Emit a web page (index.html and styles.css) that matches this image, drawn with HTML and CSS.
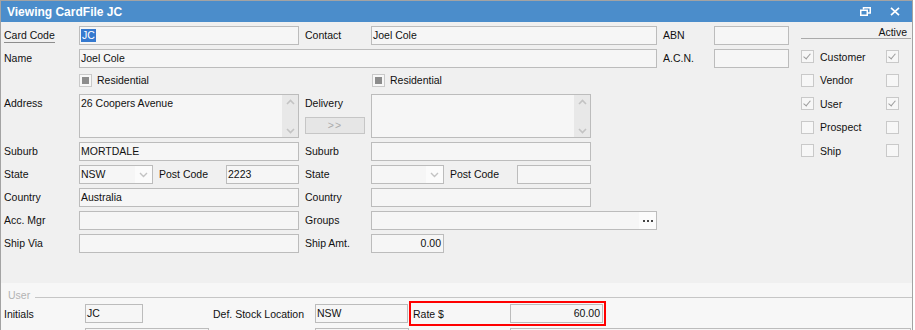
FILE: index.html
```html
<!DOCTYPE html>
<html lang="en">
<head>
    <meta charset="UTF-8">
    <title>Viewing CardFile JC</title>
    <link rel="stylesheet" href="styles.css">
</head>
<body>
<div class="window">
    <div class="titlebar">
        <span class="title">Viewing CardFile JC</span>
        <div class="win-btns">
            <svg class="win-icon" width="11" height="9" viewBox="0 0 11 9">
                <path d="M3.5 2.5V0.75H10.25V6H7.5" fill="none" stroke="#fff" stroke-width="1.5"/>
                <rect x="0.75" y="3.25" width="6.5" height="5" fill="none" stroke="#fff" stroke-width="1.5"/>
            </svg>
            <svg class="win-icon" width="10" height="9" viewBox="0 0 10 9">
                <path d="M1 0.8L9 8.2M9 0.8L1 8.2" stroke="#fff" stroke-width="1.7"/>
            </svg>
        </div>
    </div>

    <div class="main">
        <div class="form">
            <div class="row">
                <span class="lbl"><span class="link">Card Code</span></span>
                <div class="box w220"><span class="sel">JC</span></div>
                <span class="lbl2">Contact</span>
                <div class="box w286">Joel Cole</div>
                <span class="lbl3">ABN</span>
                <div class="box w75"></div>
            </div>
            <div class="row">
                <span class="lbl">Name</span>
                <div class="box w578">Joel Cole</div>
                <span class="lbl3">A.C.N.</span>
                <div class="box w75"></div>
            </div>
            <div class="row row-check">
                <span class="lbl"></span>
                <div class="chk-cell"><span class="chk ind"></span><span class="chk-text">Residential</span></div>
                <div class="chk-cell"><span class="chk ind"></span><span class="chk-text">Residential</span></div>
            </div>
            <div class="row row-area">
                <span class="lbl">Address</span>
                <div class="area w220">
                    <div class="area-text">26 Coopers Avenue</div>
                    <div class="scroll">
                        <svg width="9" height="6" viewBox="0 0 9 6"><polyline points="1,5 4.5,1.5 8,5" fill="none" stroke="#c3c3c3" stroke-width="1.6"/></svg>
                        <svg width="9" height="6" viewBox="0 0 9 6"><polyline points="1,1 4.5,4.5 8,1" fill="none" stroke="#c3c3c3" stroke-width="1.6"/></svg>
                    </div>
                </div>
                <div class="lbl2 col">
                    <span>Delivery</span>
                    <div class="copy-btn">&gt;&gt;</div>
                </div>
                <div class="area w220">
                    <div class="area-text"></div>
                    <div class="scroll">
                        <svg width="9" height="6" viewBox="0 0 9 6"><polyline points="1,5 4.5,1.5 8,5" fill="none" stroke="#c3c3c3" stroke-width="1.6"/></svg>
                        <svg width="9" height="6" viewBox="0 0 9 6"><polyline points="1,1 4.5,4.5 8,1" fill="none" stroke="#c3c3c3" stroke-width="1.6"/></svg>
                    </div>
                </div>
            </div>
            <div class="row">
                <span class="lbl">Suburb</span>
                <div class="box w220">MORTDALE</div>
                <span class="lbl2">Suburb</span>
                <div class="box w220"></div>
            </div>
            <div class="row">
                <span class="lbl">State</span>
                <div class="select w74"><span class="select-val">NSW</span><span class="arrow"><svg width="9" height="6" viewBox="0 0 9 6"><polyline points="1,1 4.5,4.5 8,1" fill="none" stroke="#c3c3c3" stroke-width="1.4"/></svg></span></div>
                <span class="lbl-pc">Post Code</span>
                <div class="box w73">2223</div>
                <span class="lbl2">State</span>
                <div class="select w73"><span class="select-val"></span><span class="arrow"><svg width="9" height="6" viewBox="0 0 9 6"><polyline points="1,1 4.5,4.5 8,1" fill="none" stroke="#c3c3c3" stroke-width="1.4"/></svg></span></div>
                <span class="lbl-pc">Post Code</span>
                <div class="box w74"></div>
            </div>
            <div class="row">
                <span class="lbl">Country</span>
                <div class="box w220">Australia</div>
                <span class="lbl2">Country</span>
                <div class="box w220"></div>
            </div>
            <div class="row">
                <span class="lbl">Acc. Mgr</span>
                <div class="box w220"></div>
                <span class="lbl2">Groups</span>
                <div class="box w286 with-btn">
                    <span class="box-fill"></span>
                    <span class="dots">
                        <svg width="10" height="2" viewBox="0 0 10 2"><rect x="0" y="0" width="2" height="2" fill="#444"/><rect x="4" y="0" width="2" height="2" fill="#444"/><rect x="8" y="0" width="2" height="2" fill="#444"/></svg>
                    </span>
                </div>
            </div>
            <div class="row">
                <span class="lbl">Ship Via</span>
                <div class="box w220"></div>
                <span class="lbl2">Ship Amt.</span>
                <div class="box w73 num">0.00</div>
            </div>
        </div>

        <div class="flags">
            <div class="flags-head">Active</div>
            <div class="flag-row"><span class="chk on"></span><span class="flag-text">Customer</span><span class="chk on"></span></div>
            <div class="flag-row"><span class="chk"></span><span class="flag-text">Vendor</span><span class="chk"></span></div>
            <div class="flag-row"><span class="chk on"></span><span class="flag-text">User</span><span class="chk on"></span></div>
            <div class="flag-row"><span class="chk"></span><span class="flag-text">Prospect</span><span class="chk"></span></div>
            <div class="flag-row"><span class="chk"></span><span class="flag-text">Ship</span><span class="chk"></span></div>
        </div>
    </div>

    <div class="user-sec">
        <div class="group-head"><span class="group-name">User</span><span class="rule"></span></div>
        <div class="urow">
            <span class="ulbl">Initials</span>
            <div class="box w58">JC</div>
            <span class="ulbl2">Def. Stock Location</span>
            <div class="box w93">NSW</div>
            <div class="highlight">
                <span class="ulbl3">Rate $</span>
                <div class="box w93 num">60.00</div>
            </div>
        </div>
        <div class="urow next">
            <span class="ulbl"></span>
            <div class="box w124"></div>
            <span class="ulbl2 short"></span>
            <div class="box w94"></div>
            <span class="ulbl-gap"></span>
            <div class="box w401"></div>
        </div>
    </div>
</div>
</body>
</html>
```

FILE: styles.css
```css
* {
    margin: 0;
    padding: 0;
    box-sizing: border-box;
}

body {
    background: #fff;
    color: #111;
    font-family: "Liberation Sans", Arial, sans-serif;
    font-size: 10.5px;
    overflow: hidden;
}

.window {
    width: 913px;
    height: 330px;
    border: 1px solid #a3a3a3;
    border-bottom: none;
    background: #f0f0f0;
    overflow: hidden;
}

/* title bar */
.titlebar {
    height: 21px;
    background: #4b8dcb;
    display: flex;
    align-items: center;
    padding-left: 6px;
}

.title {
    color: #fff;
    font-size: 12px;
    font-weight: bold;
}

.win-btns {
    margin-left: auto;
    display: flex;
    align-items: center;
    gap: 19px;
    padding-right: 12px;
}

.win-icon {
    display: block;
}

/* main form */
.main {
    display: flex;
    height: 261px;
}

.form {
    width: 800px;
    padding: 4px 0 0 3px;
}

.row {
    display: flex;
    align-items: flex-start;
    height: 23px;
    line-height: 19px;
    white-space: nowrap;
}

.row-check {
    height: 22px;
}

.row-area {
    height: 48px;
}

.lbl {
    width: 75px;
    flex: none;
}

.link {
    border-bottom: 1px solid #8d8d8d;
    line-height: 13px;
    display: inline-block;
    margin-top: 3px;
}

.lbl2 {
    width: 66px;
    margin-left: 6px;
    flex: none;
}

.lbl3 {
    width: 51px;
    margin-left: 6px;
    flex: none;
}

.lbl-pc {
    width: 67px;
    margin-left: 6px;
    flex: none;
}

.box {
    height: 19px;
    border: 1px solid #bcbcbc;
    background: #f6f6f6;
    line-height: 17px;
    padding: 0 1px;
    overflow: hidden;
    white-space: nowrap;
    flex: none;
}

.box.num {
    text-align: right;
    padding-right: 2px;
}

.w58 { width: 58px; }
.w73 { width: 73px; }
.w74 { width: 74px; }
.w75 { width: 75px; }
.w93 { width: 93px; }
.w94 { width: 94px; }
.w124 { width: 124px; }
.w220 { width: 220px; }
.w286 { width: 286px; }
.w401 { width: 401px; }
.w578 { width: 578px; }

.sel {
    display: inline-block;
    background: #3579cf;
    color: #fff;
    line-height: 13px;
    padding: 0 1px;
    margin-top: 2px;
    vertical-align: top;
}

/* groups field with ... button */
.with-btn {
    display: flex;
    padding: 0;
}

.box-fill {
    flex: 1;
}

.dots {
    width: 17px;
    background: #fbfbfb;
    display: flex;
    align-items: center;
    justify-content: center;
}

.dots svg {
    display: block;
}

/* checkboxes */
.chk-cell {
    width: 293px;
    display: flex;
    align-items: center;
    margin-top: 2px;
    line-height: 13px;
    flex: none;
}

.chk {
    width: 13px;
    height: 13px;
    border: 1px solid #c9c9c9;
    background: #f7f7f7;
    flex: none;
    position: relative;
}

.chk.ind::after {
    content: "";
    position: absolute;
    left: 2px;
    top: 2px;
    width: 7px;
    height: 7px;
    background: #8c8c8c;
}

.chk.on::after {
    content: "";
    position: absolute;
    left: 3px;
    top: 1px;
    width: 3px;
    height: 6px;
    border: solid #9c9c9c;
    border-width: 0 1.5px 1.5px 0;
    transform: rotate(40deg);
}

.chk-text {
    margin-left: 5px;
}

/* text areas */
.area {
    height: 44px;
    border: 1px solid #bcbcbc;
    background: #f6f6f6;
    display: flex;
    flex: none;
}

.area-text {
    flex: 1;
    padding: 1px 1px;
    line-height: 15px;
}

.scroll {
    width: 16px;
    background: #e8e8e8;
    display: flex;
    flex-direction: column;
    justify-content: space-between;
    align-items: center;
    padding: 4px 0 3px;
}

.scroll svg {
    display: block;
}

.col {
    display: flex;
    flex-direction: column;
    align-items: flex-start;
}

.copy-btn {
    margin-top: 4px;
    width: 60px;
    height: 17px;
    border: 1px solid #c6c6c6;
    background: #e6e6e6;
    color: #ababab;
    line-height: 15px;
    text-align: center;
    letter-spacing: 1px;
}

/* select */
.select {
    height: 19px;
    border: 1px solid #bcbcbc;
    background: #f6f6f6;
    display: flex;
    flex: none;
}

.select-val {
    flex: 1;
    padding-left: 1px;
    line-height: 17px;
}

.arrow {
    width: 17px;
    background: #fbfbfb;
    display: flex;
    align-items: center;
    justify-content: center;
}

.arrow svg {
    display: block;
}

/* right flags */
.flags {
    width: 110px;
}

.flags-head {
    height: 17px;
    padding: 5px 4px 0 0;
    line-height: 11px;
    text-align: right;
    border-bottom: 1px solid #aaaaaa;
}

.flags-head + .flag-row {
    margin-top: 6px;
}

.flag-row {
    height: 23.5px;
    display: flex;
    align-items: center;
}

.flag-text {
    width: 72px;
    padding-left: 6px;
}

/* user section */
.user-sec {
    background: #f7f7f7;
    height: 47px;
}

.group-head {
    display: flex;
    align-items: flex-start;
    height: 18px;
    padding-left: 7px;
}

.group-name {
    color: #b3b3b3;
    line-height: 13px;
    margin-top: 6px;
}

.rule {
    flex: 1;
    margin-left: 5px;
    margin-top: 14px;
    border-top: 1px solid #c6c6c6;
}

.urow {
    display: flex;
    align-items: center;
    height: 25px;
    padding-left: 3px;
    white-space: nowrap;
}

.urow.next {
    margin-top: 2px;
    align-items: flex-start;
}

.ulbl {
    width: 81px;
    flex: none;
}

.ulbl2 {
    width: 102px;
    margin-left: 70px;
    flex: none;
}

.ulbl2.short {
    margin-left: 6px;
    width: 100px;
}

.ulbl-gap {
    width: 101px;
    flex: none;
}

.highlight {
    margin-left: 1px;
    width: 197px;
    height: 25px;
    border: 2px solid #ff0000;
    display: flex;
    align-items: center;
    flex: none;
}

.ulbl3 {
    width: 99px;
    padding-left: 2px;
    flex: none;
}
```
